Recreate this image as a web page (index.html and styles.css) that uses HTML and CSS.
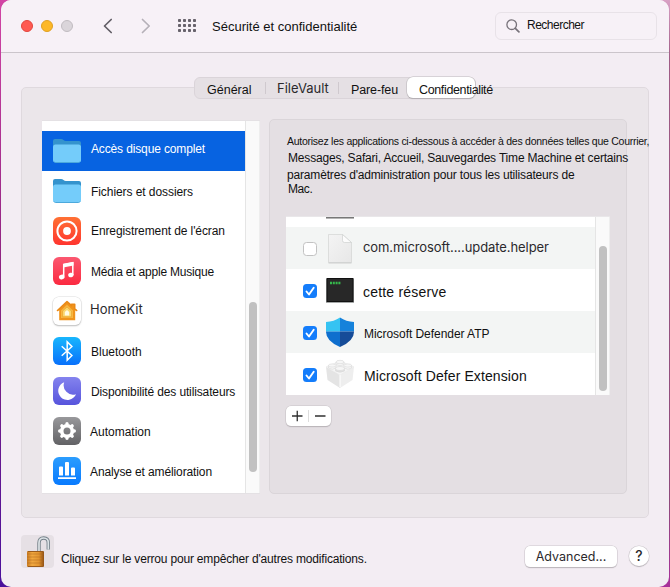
FILE: index.html
```
<!DOCTYPE html>
<html lang="fr">
<head>
<meta charset="utf-8">
<title>Sécurité et confidentialité</title>
<link rel="stylesheet" href="styles.css">
</head>
<body>
<div class="window">
  <header class="toolbar">
    <div class="lights"><i class="light red"></i><i class="light yellow"></i><i class="light off"></i></div>
    <svg class="back" width="10" height="16" viewBox="0 0 10 16"><path d="M8.2 1.5 1.5 8l6.700 6.500" fill="none" stroke="#625e66" stroke-width="1.7" stroke-linecap="round" stroke-linejoin="round"/></svg>
    <svg class="forward" width="10" height="16" viewBox="0 0 10 16"><path d="M1.500 1.500 8.200 8l-6.700 6.500" fill="none" stroke="#b5b0b8" stroke-width="1.7" stroke-linecap="round" stroke-linejoin="round"/></svg>
    <svg class="apps" width="18" height="13" viewBox="0 0 18 13" fill="#67626b"><g id="dots"><rect width="3" height="3" rx=".8"/><rect x="5" width="3" height="3" rx=".8"/><rect x="10" width="3" height="3" rx=".8"/><rect x="15" width="3" height="3" rx=".8"/></g><use href="#dots" y="5"/><use href="#dots" y="10"/></svg>
    <h1 class="title">Sécurité et confidentialité</h1>
    <div class="search">
      <svg width="14" height="14" viewBox="0 0 14 14" fill="none" stroke="#77727a" stroke-width="1.3" stroke-linecap="round"><circle cx="5.7" cy="5.7" r="4.8"/><path d="m9.3 9.3 3.6 3.6" stroke-width="1.7"/></svg>
      <span class="search-text">Rechercher</span>
    </div>
  </header>

  <main class="panel">
    <nav class="tabs">
      <span class="tab general">Général</span>
      <span class="tab vault">FileVault</span>
      <span class="tab firewall">Pare-feu</span>
      <span class="tab selected">Confidentialité</span>
    </nav>
    <div class="columns">
      <section class="sidebar">
        <ul class="categories">
          <li class="category active"><svg class="icon" viewBox="0 0 28 28"><path d="M0 4q0-2 2-2h6q1.500 0 2.500 1T13 4h13q2 0 2 2v6H0z" fill="#3493cd"/><rect y="7.500" width="28" height="18" rx="2.500" fill="#74ccfa"/><path d="M1 24.500q.5 1 1.500 1h23q1 0 1.500-1" fill="none" stroke="#4ca9dc"/></svg><span class="c-access">Accès disque complet</span></li>
          <li class="category"><svg class="icon" viewBox="0 0 28 28"><path d="M0 4q0-2 2-2h6q1.500 0 2.500 1T13 4h13q2 0 2 2v6H0z" fill="#3493cd"/><rect y="7.500" width="28" height="18" rx="2.500" fill="#74ccfa"/><path d="M1 24.500q.5 1 1.500 1h23q1 0 1.500-1" fill="none" stroke="#4ca9dc"/></svg><span class="c-files">Fichiers et dossiers</span></li>
          <li class="category"><svg class="icon" viewBox="0 0 28 28"><defs><linearGradient id="rec" x2="0" y2="1"><stop stop-color="#ff7134"/><stop offset="1" stop-color="#ff352f"/></linearGradient></defs><rect width="28" height="28" rx="6" fill="url(#rec)"/><circle cx="14" cy="14" r="9.600" fill="none" stroke="#fff" stroke-width="2"/><circle cx="14" cy="14" r="3.900" fill="#fff"/></svg><span class="c-record">Enregistrement de l'écran</span></li>
          <li class="category"><svg class="icon" viewBox="0 0 28 28"><defs><linearGradient id="mus" x2="0" y2="1"><stop stop-color="#fb5870"/><stop offset="1" stop-color="#fb2a40"/></linearGradient></defs><rect width="28" height="28" rx="6" fill="url(#mus)"/><path d="M10.700 18.900V7.700L19.800 5.800v12.300" fill="none" stroke="#fff" stroke-width="1.500"/><path d="m10.200 6.800 10.300-2.100v3.800l-10.300 2.100z" fill="#fff"/><ellipse cx="8.800" cy="20" rx="2.900" ry="2.300" fill="#fff" transform="rotate(-15 8.800 20)"/><ellipse cx="17.900" cy="18" rx="2.700" ry="2.200" fill="#fff" transform="rotate(-15 17.900 18)"/></svg><span class="c-media">Média et apple Musique</span></li>
          <li class="category"><svg class="icon bordered" viewBox="0 0 28 28"><rect width="28" height="28" rx="6" fill="#fff"/><path d="M6.200 13.500v9.700h16v-9.700L14 6z" fill="#f0941c"/><path d="m4.500 13.500 9.500-8.800 4.500 4V7.200h3.200v4.500l2 1.800" fill="#f0941c" stroke="#ea8916" stroke-width="1.600" stroke-linejoin="round" stroke-linecap="round"/><path d="m14 7.800 6 5.600V21H8v-7.600z" fill="#f8b740"/><path d="m14 10 4.500 4.100v5.700h-9v-5.700z" fill="#fbd66c" stroke="#e5a02c" stroke-width=".6"/><path d="m14 13 2.200 2v3.500h-4.400V15z" fill="#fffbe2"/></svg><span class="mac c-home">HomeKit</span></li>
          <li class="category"><svg class="icon" viewBox="0 0 28 28"><defs><linearGradient id="blu" x2="0" y2="1"><stop stop-color="#18b6fd"/><stop offset="1" stop-color="#0870fb"/></linearGradient></defs><rect width="28" height="28" rx="6" fill="url(#blu)"/><path d="m8.700 9.200 10.200 9.300-4.700 4.700V4.900l4.700 4.600-10.200 9.300" fill="none" stroke="#fff" stroke-width="1.500"/></svg><span class="c-blue">Bluetooth</span></li>
          <li class="category"><svg class="icon" viewBox="0 0 28 28"><defs><linearGradient id="foc" x2="0" y2="1"><stop stop-color="#8483ee"/><stop offset="1" stop-color="#5754dc"/></linearGradient></defs><rect width="28" height="28" rx="6" fill="url(#foc)"/><path d="M11.200 5.200A9.200 9.200 0 1 0 23 17.200 9.400 9.400 0 0 1 11.200 5.200z" fill="#fff"/></svg><span class="c-focus">Disponibilité des utilisateurs</span></li>
          <li class="category"><svg class="icon" viewBox="0 0 28 28"><defs><linearGradient id="aut" x2="0" y2="1"><stop stop-color="#98989b"/><stop offset="1" stop-color="#626265"/></linearGradient></defs><rect width="28" height="28" rx="6" fill="url(#aut)"/><circle cx="14" cy="14" r="5.300" fill="none" stroke="#fff" stroke-width="3.600"/><g stroke="#fff" stroke-width="3.400" stroke-linecap="round"><path id="tooth" d="M14 6.700V7.500M14 20.500v.8"/><use href="#tooth" transform="rotate(45 14 14)"/><use href="#tooth" transform="rotate(90 14 14)"/><use href="#tooth" transform="rotate(135 14 14)"/></g></svg><span class="c-auto">Automation</span></li>
          <li class="category"><svg class="icon" viewBox="0 0 28 28"><defs><linearGradient id="ana" x2="0" y2="1"><stop stop-color="#2b9dfe"/><stop offset="1" stop-color="#087afe"/></linearGradient></defs><rect width="28" height="28" rx="6" fill="url(#ana)"/><path d="M6 10.500q0-1 1-1h2q1 0 1 1V18.500H6zM12 6q0-1 1-1h2q1 0 1 1v12.500h-4zM18 11.500q0-1 1-1h2q1 0 1 1v7h-4zM5 20.300h18v1.600H5z" fill="#fff"/></svg><span class="c-stats">Analyse et amélioration</span></li>
        </ul>
        <div class="track"><div class="thumb side-thumb"></div></div>
      </section>

      <section class="detail">
        <div class="description">
          <p class="d1">Autorisez les applications ci-dessous à accéder à des données telles que Courrier,</p>
          <p class="d2">Messages, Safari, Accueil, Sauvegardes Time Machine et certains</p>
          <p class="d3">paramètres d'administration pour tous les utilisateurs de</p>
          <p class="d4">Mac.</p>
        </div>
        <div class="apps-table">
          <div class="rows">
            <div class="row cut"><i></i></div>
            <div class="row alt"><i class="check"></i><svg class="app-icon" viewBox="0 0 28 32"><defs><linearGradient id="doc" x2="1" y2="1"><stop stop-color="#f4f4f4"/><stop offset="1" stop-color="#e7e7e7"/></linearGradient></defs><path d="M2.500 2.500h14l9 8V30.500h-23z" fill="url(#doc)" stroke="#d2d4d3" stroke-width=".7"/><path d="M16.500 2.500v6q0 2 2 2h7z" fill="#fcfcfc" stroke="#cfd1d0" stroke-width=".7"/><path d="M2.500 31h23" stroke="#c5c7c6" stroke-width=".8"/></svg><span class="mac r1">com.microsoft....update.helper</span></div>
            <div class="row"><i class="check on"><svg viewBox="0 0 14 14"><path d="m3.500 7.500 2.500 3L10.700 3.700"/></svg></i><svg class="app-icon" viewBox="0 0 28 32"><rect y="5" width="28" height="24" fill="#a4a7a7"/><rect x=".5" y="4" width="27" height="24" fill="#111"/><rect x="1.500" y="5" width="25" height="22" fill="#282828"/><path d="M4 9h11" stroke="#35b94b" stroke-width="2.400" stroke-dasharray="2 .8"/></svg><span class="r2">cette réserve</span></div>
            <div class="row alt"><i class="check on"><svg viewBox="0 0 14 14"><path d="m3.500 7.500 2.500 3L10.700 3.700"/></svg></i><svg class="app-icon" viewBox="0 0 28 32"><defs><clipPath id="shield"><path d="M0 6q8-.5 14-4.500Q20 5.500 28 6v10q0 9-14 15Q0 25 0 16z"/></clipPath></defs><g clip-path="url(#shield)"><path d="M0 0h14v15.500H0z" fill="#35c3f2"/><path d="M14 0h14v15.500H14z" fill="#1682db"/><path d="M0 15.500h14V32H0z" fill="#0e6fce"/><path d="M14 15.500h14V32H14z" fill="#164c98"/></g></svg><span class="r3">Microsoft Defender ATP</span></div>
            <div class="row"><i class="check on"><svg viewBox="0 0 14 14"><path d="m3.500 7.500 2.500 3L10.700 3.700"/></svg></i><svg class="app-icon" viewBox="0 0 28 32"><path d="m0 9 14 8v13L1.500 22z" fill="#e4e4e4"/><path d="m28 9-14 8v13l12.500-8z" fill="#eee"/><path d="M0 9 14 3l14 6-14 8z" fill="#f5f5f5" stroke="#e6e6e6" stroke-width=".6"/><path d="M14 17v12" stroke="#fff"/><g fill="#f6f6f6" stroke="#d9d9d9" stroke-width=".6"><path d="M10 4v2.500q4 2.500 8 0V4z"/><ellipse cx="14" cy="4" rx="4" ry="1.700"/><path d="M2.500 7.500V10q4 2.500 7.500 0V7.500z"/><ellipse cx="6.200" cy="7.500" rx="3.800" ry="1.600"/><path d="M18 7.500V10q4 2.500 7.500 0V7.500z"/><ellipse cx="21.800" cy="7.500" rx="3.800" ry="1.600"/><path d="M9.500 10.500V13q4.500 2.500 9 0v-2.500z" fill="#e0e0e0"/><ellipse cx="14" cy="10.500" rx="4.500" ry="2"/></g></svg><span class="r4">Microsoft Defer Extension</span></div>
          </div>
          <div class="track"><div class="thumb table-thumb"></div></div>
        </div>
        <div class="plusminus"><svg width="45" height="20" viewBox="0 0 45 20" stroke="#303030" stroke-width="1.300"><path d="M6 10h10.500M11.250 4.750v10.500M29 10h10.500"/><path d="M22.500 4v12" stroke="#ddd" stroke-width="1"/></svg></div>
      </section>
    </div>
  </main>

  <footer class="footer">
    <div class="lock"><svg width="33" height="33" viewBox="0 0 33 33"><defs><linearGradient id="brass"><stop stop-color="#c97a20"/><stop offset=".3" stop-color="#f1a940"/><stop offset=".7" stop-color="#e39530"/><stop offset="1" stop-color="#8f5014"/></linearGradient></defs><path d="M18 17V8q0-5 4.700-5T27.300 8v6.500" fill="none" stroke="#748089" stroke-width="3.400"/><path d="M18 17V8q0-5 4.700-5T27.300 8v6.500" fill="none" stroke="#dce2e6" stroke-width="1.700"/><rect x="6" y="16" width="17" height="16" rx="1" fill="url(#brass)"/><path d="M6 19h17M6 22h17M6 25h17M6 28h17" stroke="#a9651e" stroke-width=".7" opacity=".65"/><path d="M7 16.500h15M7 31.500h15" stroke="#9a5b1b"/></svg></div>
    <span class="lock-text">Cliquez sur le verrou pour empêcher d'autres modifications.</span>
    <span class="button mac">Advanced...</span>
    <span class="help mac">?</span>
  </footer>
</div>
</body>
</html>
```
FILE: styles.css
```
* { box-sizing: border-box; }
html, body { height: 100%; overflow: hidden; }
body {
  margin: 0;
  padding: 0 1px;
  background:
    linear-gradient(#d8a0c4, #a05c86 10%, #8f4a7c 85%, #a8309a) right / 50% 100% no-repeat,
    linear-gradient(#d245a5, #8e2381 45%, #4a109c);
  font-family: "Liberation Sans", sans-serif;
  font-size: 12px;
  line-height: 16px;
  color: #111;
}
ul, p, h1 { margin: 0; padding: 0; }
svg { display: block; flex: none; }
.mac { font-family: Inter, sans-serif; font-size: 13px; color: #2b292c; }

.window {
  height: 587px;
  border-radius: 10px;
  background: #f3edf3;
  overflow: hidden;
  white-space: nowrap;
}
.toolbar {
  height: 53px;
  display: flex;
  align-items: center;
  padding: 0 12px 1px 20px;
  background: #f7f1f7;
  border-bottom: 1px solid #cbc5cb;
}
.lights { display: flex; gap: 8px; }
.light { width: 12px; height: 12px; border-radius: 50%; border: 1px solid; }
.red { background: #ff5a52; border-color: #e2453e; }
.yellow { background: #fdb827; border-color: #dfa023; }
.off { background: #dad5da; border-color: #c1bcc1; }
.back { margin-left: 30px; }
.forward { margin-left: 28px; }
.apps { margin-left: 27px; }
.title { font-size: 13px; font-weight: 400; letter-spacing: 0; margin-left: 16px; padding-top: 2px; }
.search {
  width: 162px;
  height: 28px;
  margin-left: auto;
  display: flex;
  align-items: center;
  gap: 7px;
  padding-left: 10px;
  border: 1px solid #e8e2e8;
  border-radius: 6px;
}
.search-text { font-size: 12px; letter-spacing: -.5px; padding-bottom: 2px; }

.panel {
  height: 431px;
  margin: 34px 20px 0;
  border: 1px solid #dfd9de;
  border-radius: 5px;
  background: #ebe6ea;
}
.tabs {
  width: 282px;
  height: 22px;
  margin: -11px 0 0 172px;
  display: flex;
  border: 1px solid #dad4d9;
  border-radius: 6px;
  background: #e5e0e4;
}
.tab { height: 20px; line-height: 24px; font-size: 12.5px; }
.general { width: 70px; padding-left: 12px; }
.vault {
  width: 74px;
  height: 12px;
  line-height: 12px;
  margin-top: 4px;
  padding-left: 11px;
  border: solid #cfc9ce;
  border-width: 0 1px;
  font-family: Inter, sans-serif;
  color: #2b292c;
  font-size: 13px;
}
.firewall { width: 68px; padding-left: 12px; letter-spacing: -.12px; }
.selected {
  width: 68px;
  height: 21px;
  margin-top: -1px;
  padding-left: 12px;
  line-height: 26px;
  border-radius: 6px;
  background: #fff;
  box-shadow: 0 0 0 .5px #bcb7bb, 0 1px 1px #aaa5aa;
  letter-spacing: -.36px;
}

.columns { display: flex; gap: 9px; margin: 21px 21px 0 20px; }
.sidebar {
  width: 218px;
  height: 374px;
  display: flex;
  border: 1px solid #e4e1e4;
  border-width: 1px 0;
  background: #fff;
}
.categories { width: 203px; padding-top: 10px; list-style: none; }
.category { height: 40px; display: flex; align-items: center; padding-left: 11px; gap: 10px; }
.category span { padding-top: 2px; }
.active { background: #0763e1; color: #fff; }
.icon { width: 28px; height: 28px; }
.bordered { border-radius: 6px; box-shadow: 0 0 0 .5px #ddd, 0 1px 1.5px #aaa; }
.category .c-access { letter-spacing: -.14px; padding: 0 0 4px; }
.c-files { letter-spacing: -.07px; }
.c-record { letter-spacing: -.1px; }
.c-media { letter-spacing: -.2px; }
.category .c-home { margin-left: -1px; padding: 0 0 4px; }
.category .c-record { padding-top: 0; }
.c-focus { letter-spacing: -.13px; }
.c-auto, .c-stats { margin-left: -1px; }
.c-stats { letter-spacing: -.12px; }
.track {
  width: 15px;
  display: flex;
  justify-content: center;
  background: #fafafa;
  border-left: 1px solid #e5e5e5;
  border-right: 1px solid #eee;
}
.thumb { width: 8px; border-radius: 4px; background: #c1c1c1; }
.side-thumb { height: 170px; margin-top: 181px; }

.detail {
  width: 358px;
  height: 375px;
  margin-top: -1px;
  padding: 14px 16px 0 16px;
  border: 1px solid #dad5d9;
  border-radius: 5px;
  background: #e4dfe3;
}
.description { height: 82px; padding-left: 1px; }
.d1 { font-size: 10.5px; letter-spacing: -.26px; line-height: 14px; }
.d2 { letter-spacing: -.18px; line-height: 20px; padding-left: 1px; }
.d3 { letter-spacing: -.17px; line-height: 14px; }
.d4 { letter-spacing: -.4px; line-height: 14px; padding-left: 1px; }
.apps-table { height: 179px; width: 324px; display: flex; background: #fff; border-top: 1px solid #e9e7e9; }
.rows { width: 310px; }
.row { height: 42px; display: flex; align-items: center; padding-left: 17px; }
.alt { background: #f3f5f4; }
.cut { height: 10px; align-items: flex-start; padding-left: 40px; }
.cut i { width: 28px; height: 2px; background: #777; border-bottom: 1px solid #b5b5b5; }
.check { width: 14px; height: 14px; margin-top: 2px; border: 1px solid #c2c2c2; border-radius: 3.5px; background: #fff; }
.on { border: 0; background: #147dfb; }
.on svg { fill: none; stroke: #fff; stroke-width: 1.9; stroke-linecap: round; stroke-linejoin: round; }
.app-icon { width: 28px; height: 32px; margin: 0 10px 0 9px; }
.r1 { letter-spacing: -.08px; margin-left: -1px; padding-bottom: 2px; }
.r2 { font-size: 14px; letter-spacing: .2px; margin-left: -1px; padding-top: 4px; }
.r3 { letter-spacing: -.05px; padding-top: 4px; }
.r4 { font-size: 14px; letter-spacing: .1px; padding-top: 4px; }
.table-thumb { height: 145px; margin-top: 29px; }
.plusminus {
  width: 45px;
  height: 20px;
  margin-top: 11px;
  border-radius: 5px;
  background: #fff;
  box-shadow: 0 0 0 .5px #c8c3c7, 0 1px 1px #aaa5a9;
}

.footer { display: flex; margin: 17px 20px 0; height: 33px; }
.lock { width: 33px; height: 33px; border-radius: 4px; background: #e6e0e5; }
.lock-text { margin-left: 7px; padding-top: 16px; letter-spacing: -.18px; }
.button {
  width: 92px;
  height: 21px;
  margin: 11px 0 0 auto;
  text-align: center;
  line-height: 21px;
  font-size: 12.5px;
  background: #fff;
  border-radius: 5px;
  box-shadow: 0 0 0 .5px #cbc6cb, 0 1px 1px #aaa5aa;
}
.help {
  width: 20px;
  height: 20px;
  margin: 11px 0 0 12px;
  border-radius: 50%;
  background: #fff;
  text-align: center;
  line-height: 20px;
  font-size: 14px;
  font-weight: 500;
  box-shadow: 0 0 0 .5px #cbc6cb, 0 1px 1px #aaa5aa;
}
```
